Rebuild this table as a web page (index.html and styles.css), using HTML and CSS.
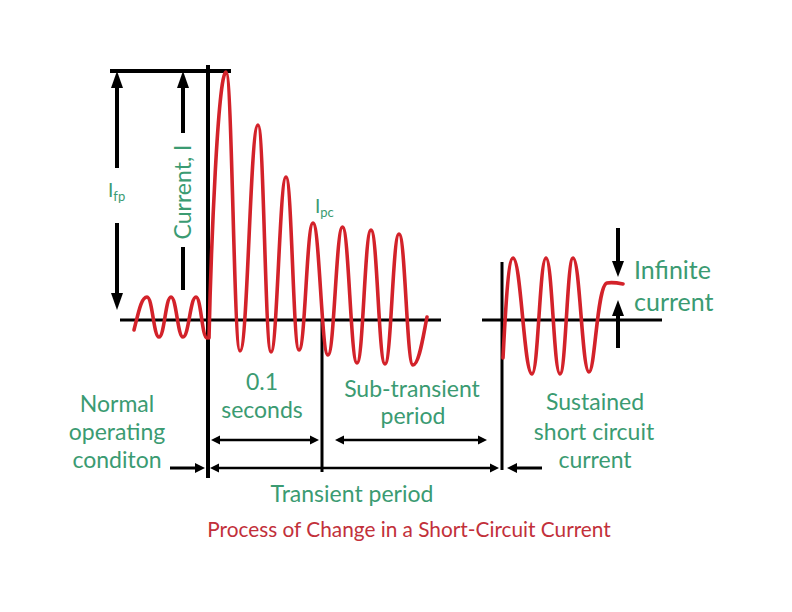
FILE: index.html
```html
<!DOCTYPE html>
<html lang="en">
<head>
<meta charset="utf-8">
<title>Process of Change in a Short-Circuit Current</title>
<link rel="stylesheet" href="styles.css">
</head>
<body>
<main class="page">
<svg class="diagram" width="792" height="612" viewBox="0 0 792 612" xmlns="http://www.w3.org/2000/svg">
  <!-- axes and frame lines -->
  <g class="ink">
    <line class="thick" x1="110" y1="71" x2="231" y2="71"/>
    <line class="thick" x1="208" y1="65" x2="208" y2="478"/>
    <line class="mid" x1="120" y1="320" x2="441" y2="320"/>
    <line class="mid" x1="482" y1="320" x2="662" y2="320"/>
    <line class="mid" x1="322" y1="320" x2="322" y2="472"/>
    <line class="mid" x1="502" y1="262" x2="502" y2="470"/>

    <!-- I_fp arrow -->
    <line class="thick" x1="117" y1="86" x2="117" y2="168"/>
    <polygon points="117,71 111,88 123,88"/>
    <line class="thick" x1="117" y1="223" x2="117" y2="296"/>
    <polygon points="117,310 111,293 123,293"/>

    <!-- Current, I arrow -->
    <line class="thick" x1="183" y1="86" x2="183" y2="133"/>
    <polygon points="183,71 177,88 189,88"/>
    <line class="thick" x1="183" y1="247" x2="183" y2="290"/>

    <!-- Infinite current arrows -->
    <line class="thick" x1="618" y1="228" x2="618" y2="264"/>
    <polygon points="618,277 612,261 624,261"/>
    <line class="thick" x1="618" y1="314" x2="618" y2="348"/>
    <polygon points="618,300 612,316 624,316"/>

    <!-- 0.1 seconds arrow -->
    <line class="thin" x1="216" y1="440" x2="314" y2="440"/>
    <polygon points="211,440 220,435.5 220,444.5"/>
    <polygon points="319,440 310,435.5 310,444.5"/>

    <!-- Sub-transient arrow -->
    <line class="thin" x1="340" y1="440" x2="482" y2="440"/>
    <polygon points="335,440 344,435.5 344,444.5"/>
    <polygon points="487,440 478,435.5 478,444.5"/>

    <!-- Transient period arrow -->
    <line class="thin" x1="215" y1="468" x2="494" y2="468"/>
    <polygon points="210,468 219,463.5 219,472.5"/>
    <polygon points="499,468 490,463.5 490,472.5"/>

    <!-- Normal condition arrow -->
    <line class="mid" x1="170" y1="468" x2="198" y2="468"/>
    <polygon points="205,468 195,463 195,473"/>

    <!-- Sustained arrow -->
    <line class="mid" x1="514" y1="468" x2="542" y2="468"/>
    <polygon points="507,468 517,463 517,473"/>
  </g>

  <!-- current waveforms -->
  <g class="wave">
    <path d="M134,330 C139,310 141.6,297 147,297 C152.4,297 153.6,337 159,337 C164.4,337 165.6,297 171,297 C176.4,297 177.6,337 183,337 C188.8,337 190.2,297 196,297 C201,297 202,338 207,338"/>
    <path d="M209,338 C211,250 218,72 226,72 C232.3,72 233.7,351 240,351 C247.9,351 250.1,125 258,125 C263.9,125 265.1,352 271,352 C277.3,352 279.7,177 286,177 C291.9,177 293.1,350 299,350 C305.3,350 306.7,223 313,223 C319.5,223 321.5,355 328,355 C334.3,355 336.2,227 342.5,227 C348.8,227 350.7,363 357,363 C363.3,363 364.7,230 371,230 C377.3,230 378.7,364 385,364 C391.3,364 392.7,234 399,234 C405.3,234 406.7,365 413,365 C419,365 423,337 427,317"/>
    <path d="M503,358 C505,320 508,258 513,258 C521,258 524,374 532,374 C538.3,374 539.7,258 546,258 C552.3,258 553.7,374 560,374 C565.8,374 567.2,258 573,258 C580,258 582,372 589,372 C595,372 597,285 607,283 C612,282 618,283 623,284"/>
  </g>

  <!-- labels -->
  <g class="label">
    <text x="108" y="197" class="sym">I<tspan class="sub" dy="4">fp</tspan></text>
    <text x="315" y="213" class="sym">I<tspan class="sub" dy="4">pc</tspan></text>
    <text class="rot" x="0" y="0" transform="translate(191 192) rotate(-90)" text-anchor="middle">Current, I</text>

    <text class="big" x="634" y="279">Infinite</text>
    <text class="big" x="634" y="311">current</text>

    <text x="262" y="390" text-anchor="middle">0.1</text>
    <text x="262" y="418" text-anchor="middle">seconds</text>

    <text x="412" y="397" text-anchor="middle">Sub-transient</text>
    <text x="413" y="424" text-anchor="middle">period</text>

    <text x="117" y="412" text-anchor="middle">Normal</text>
    <text x="117" y="440" text-anchor="middle">operating</text>
    <text x="117" y="468" text-anchor="middle">conditon</text>

    <text x="595" y="410" text-anchor="middle">Sustained</text>
    <text x="594" y="440" text-anchor="middle">short circuit</text>
    <text x="595" y="468" text-anchor="middle">current</text>

    <text x="352" y="502" text-anchor="middle">Transient period</text>
  </g>
  <text class="caption" x="409" y="537" text-anchor="middle">Process of Change in a Short-Circuit Current</text>
</svg>
</main>
</body>
</html>
```

FILE: styles.css
```css
html, body {
  margin: 0;
  padding: 0;
  background: #ffffff;
}

.page {
  width: 792px;
  height: 612px;
  overflow: hidden;
}

.diagram {
  display: block;
}

.ink line {
  stroke: #000000;
  stroke-linecap: butt;
}

.ink polygon {
  fill: #000000;
}

.ink .thick {
  stroke-width: 4;
}

.ink .mid {
  stroke-width: 3;
}

.ink .thin {
  stroke-width: 2.5;
}

.wave path {
  fill: none;
  stroke: #d3222a;
  stroke-width: 3.6;
  stroke-linejoin: round;
  stroke-linecap: round;
}

.label text {
  font-family: Lato, "Liberation Sans", sans-serif;
  font-size: 23px;
  fill: #3b9b72;
}

.label .big {
  font-size: 25px;
}

.label .sym {
  font-size: 19px;
}

.label .sub {
  font-size: 13px;
}

.caption {
  font-family: Lato, "Liberation Sans", sans-serif;
  font-size: 20.8px;
  fill: #c2303a;
}
```
